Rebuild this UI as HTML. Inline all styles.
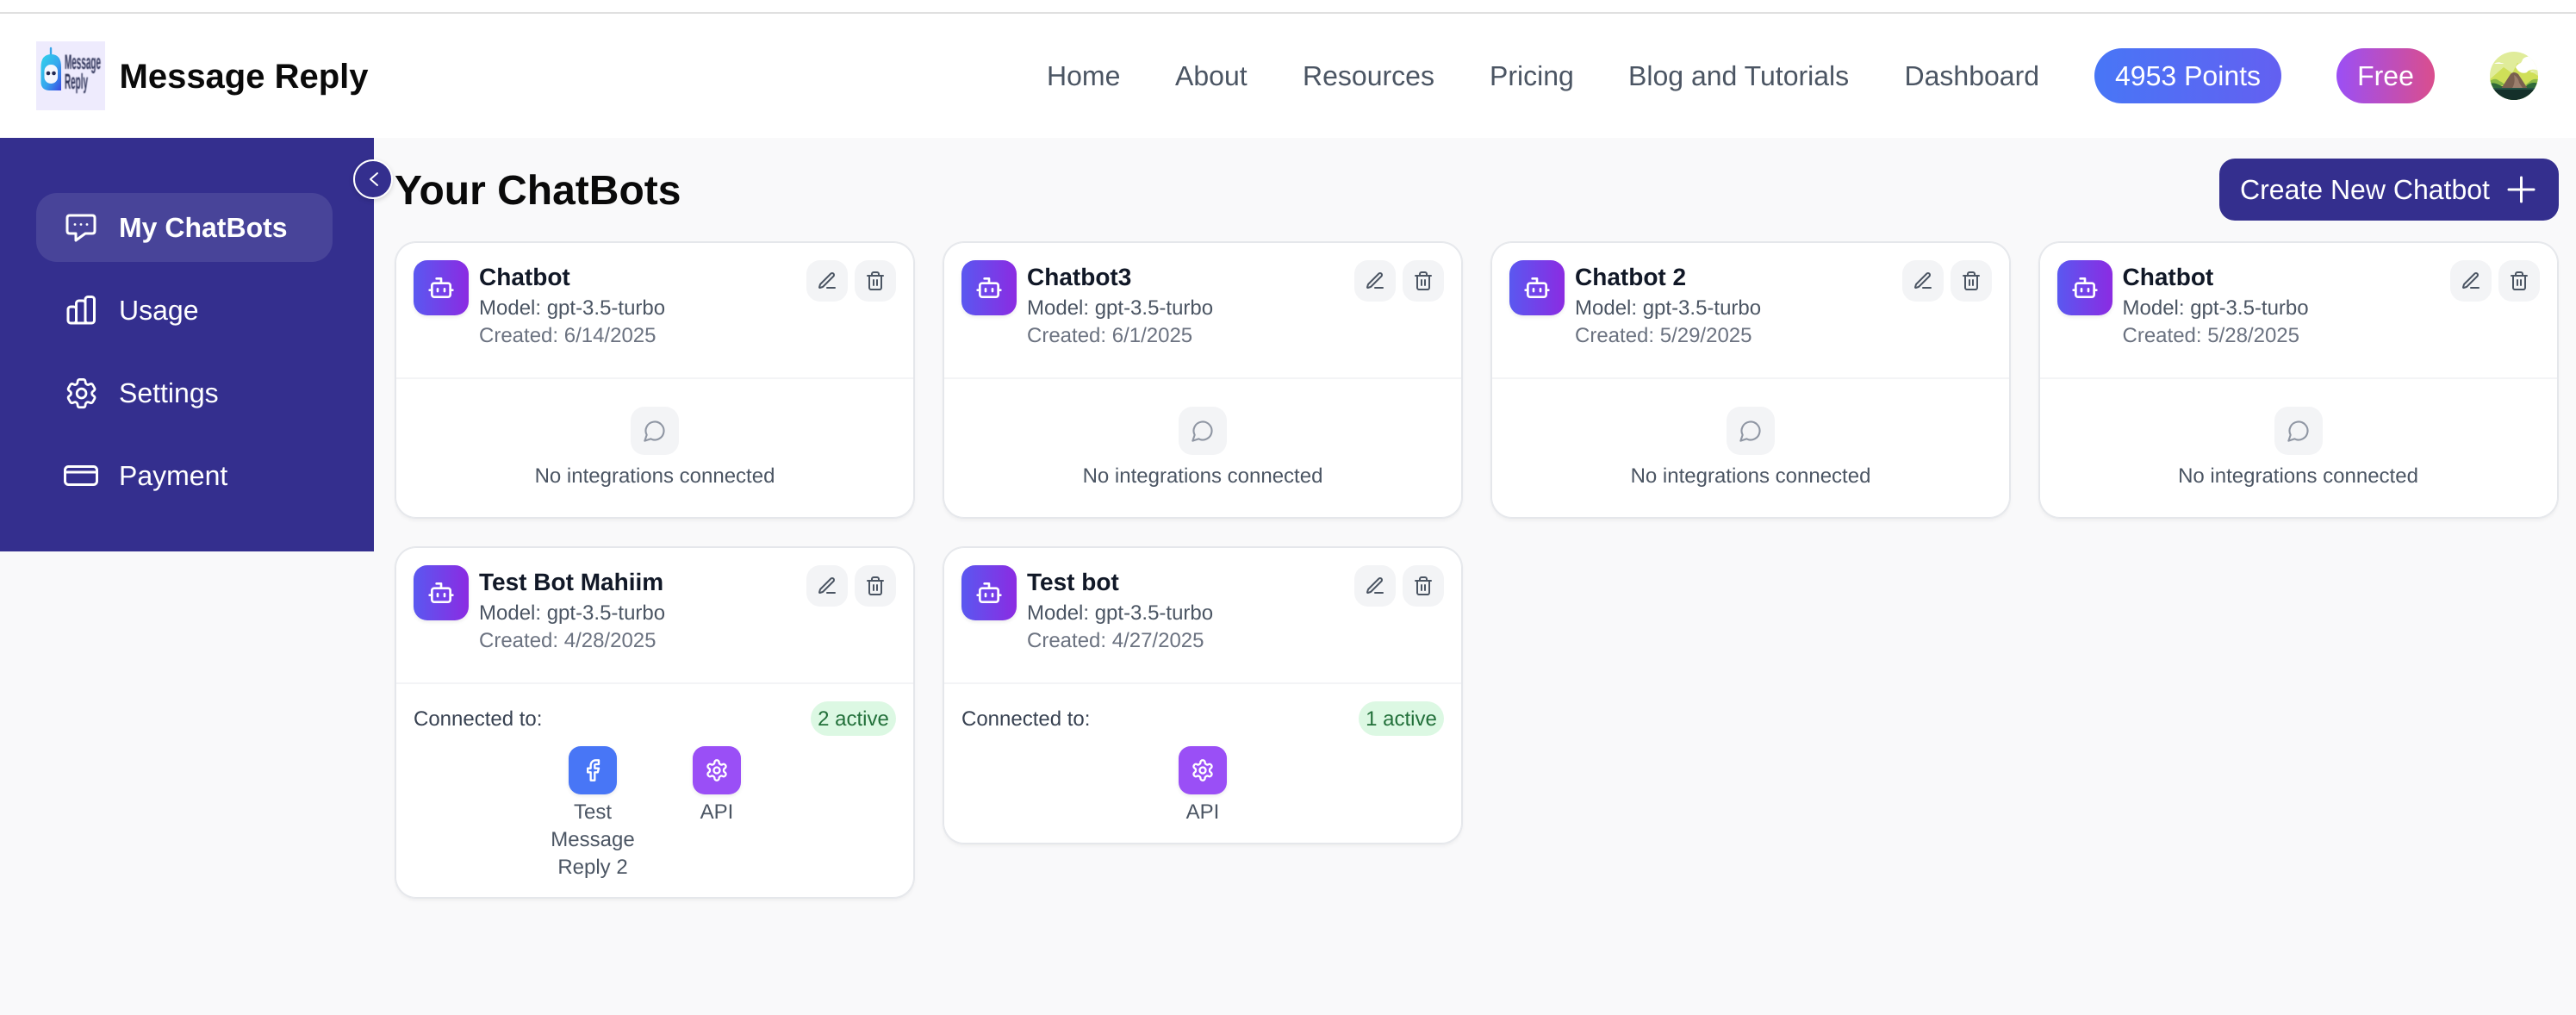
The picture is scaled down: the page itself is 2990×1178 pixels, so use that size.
<!DOCTYPE html>
<html lang="en">
<head>
<meta charset="utf-8">
<title>Message Reply</title>
<style>
*{box-sizing:border-box;margin:0;padding:0}
html,body{width:2990px;height:1178px;overflow:hidden;background:#f9f9fa;font-family:"Liberation Sans",Arial,sans-serif;text-rendering:geometricPrecision}
.a,.a>*{position:absolute}
.t{position:absolute;white-space:nowrap;line-height:32px}
svg{position:absolute;display:block;overflow:visible}
.top{left:0;top:0;width:2990px;height:160px;background:#fff}
.line{left:0;top:14px;width:2990px;height:2px;background:#e0e0e0}
.nav{top:72px;font-size:32px;color:#4b5563}
.pill{position:absolute;top:56px;height:64px;border-radius:32px;color:#fff;font-size:32px;line-height:64px;text-align:center}
.side{position:absolute;left:0;top:160px;width:434px;height:480px;background:#342f8e}
.mi{left:138px;font-size:32px;color:#fff}
.card{position:absolute;width:602px;background:#fff;border-radius:24px;box-shadow:0 0 0 1px #e5e7eb,inset 0 0 0 1px #e5e7eb,0 3px 5px rgba(0,0,0,.05)}
.bi{position:absolute;left:21px;top:21px;width:64px;height:64px;border-radius:16px;background:linear-gradient(90deg,#5a58f0,#8b2be2);box-shadow:0 2px 4px rgba(0,0,0,.08)}
.name{left:97px;top:25px;font-size:28px;font-weight:bold;color:#111827}
.model{left:97px;top:61px;font-size:24px;color:#4b5563}
.made{left:97px;top:93px;font-size:24px;color:#6b7280}
.btn{position:absolute;top:21px;width:48px;height:48px;border-radius:16px;background:#f3f4f6}
.e{left:477px}.d{left:533px}
.div{position:absolute;left:1px;right:1px;top:157px;height:2px;background:#f3f4f6}
.eb{position:absolute;left:273px;top:191px;width:56px;height:56px;border-radius:16px;background:#f3f4f6}
.et{left:0;width:602px;text-align:center;top:256px;font-size:24px;color:#4b5563}
.ct{left:21px;top:184px;font-size:24px;color:#374151}
.bd{position:absolute;left:482px;top:179px;width:99px;height:40px;border-radius:20px;background:#dcf8e3;color:#22703a;font-size:24px;line-height:41px;text-align:center}
.ib{position:absolute;top:231px;width:56px;height:56px;border-radius:14px;box-shadow:0 2px 4px rgba(0,0,0,.08)}
.fb{background:#4876f6}.api{background:#9a4ff6}
.lb{width:144px;text-align:center;font-size:24px;color:#4b5563}
.s{fill:none;stroke-linecap:round;stroke-linejoin:round}
</style>
</head>
<body>
<svg width="0" height="0" style="left:0;top:0">
<defs>
<symbol id="bot" viewBox="0 0 24 24"><g class="s" stroke="#fff" stroke-width="2"><path d="M12 8V4H8"/><rect x="4" y="8" width="16" height="12" rx="2"/><path d="M2 14h2M20 14h2M15 13v2M9 13v2"/></g></symbol>
<symbol id="pen" viewBox="0 0 24 24"><g class="s" stroke="#4b5563" stroke-width="2"><path d="M12 20h9"/><path d="M16.376 3.622a1 1 0 0 1 3.002 3.002L7.368 18.635a2 2 0 0 1-.855.506l-2.872.838a.5.5 0 0 1-.62-.62l.838-2.872a2 2 0 0 1 .506-.854z"/></g></symbol>
<symbol id="trash" viewBox="0 0 24 24"><g class="s" stroke="#4b5563" stroke-width="2"><path d="M3 6h18M19 6v14c0 1-1 2-2 2H7c-1 0-2-1-2-2V6M8 6V4c0-1 1-2 2-2h4c1 0 2 1 2 2v2M10 11v6M14 11v6"/></g></symbol>
<symbol id="bub" viewBox="0 0 24 24"><path class="s" stroke="#8f96a3" stroke-width="1.800" d="M7.9 20A9 9 0 1 0 4 16.1L2 22Z"/></symbol>
<symbol id="fbk" viewBox="0 0 24 24"><path class="s" stroke="#fff" stroke-width="2" d="M18 2h-3a5 5 0 0 0-5 5v3H7v4h3v8h4v-8h3l1-4h-4V7a1 1 0 0 1 1-1h3z"/></symbol>
<symbol id="gear" viewBox="0 0 24 24"><g class="s" stroke="#fff" stroke-width="2"><path d="M12.22 2h-.44a2 2 0 0 0-2 2v.18a2 2 0 0 1-1 1.73l-.43.25a2 2 0 0 1-2 0l-.15-.08a2 2 0 0 0-2.73.73l-.22.38a2 2 0 0 0 .73 2.73l.15.1a2 2 0 0 1 1 1.72v.51a2 2 0 0 1-1 1.74l-.15.09a2 2 0 0 0-.73 2.73l.22.38a2 2 0 0 0 2.73.73l.15-.08a2 2 0 0 1 2 0l.43.25a2 2 0 0 1 1 1.73V20a2 2 0 0 0 2 2h.44a2 2 0 0 0 2-2v-.18a2 2 0 0 1 1-1.73l.43-.25a2 2 0 0 1 2 0l.15.08a2 2 0 0 0 2.73-.73l.22-.39a2 2 0 0 0-.73-2.73l-.15-.08a2 2 0 0 1-1-1.74v-.5a2 2 0 0 1 1-1.74l.15-.09a2 2 0 0 0 .73-2.73l-.22-.38a2 2 0 0 0-2.73-.73l-.15.08a2 2 0 0 1-2 0l-.43-.25a2 2 0 0 1-1-1.73V4a2 2 0 0 0-2-2z"/><circle cx="12" cy="12" r="3"/></g></symbol>
</defs>
</svg>

<div class="a top"></div>
<div class="a line"></div>

<!-- Logo -->
<svg style="left:42px;top:48px" width="80" height="80" viewBox="42 48 80 80">
<defs><linearGradient id="lg" x1="0" y1="0" x2="1" y2="1"><stop offset="0" stop-color="#2fd4ea"/><stop offset=".55" stop-color="#36a6ee"/><stop offset="1" stop-color="#3a48e2"/></linearGradient></defs>
<rect x="42" y="48" width="80" height="80" fill="#eeebfd"/>
<path d="M59 56v8" stroke="#3aa5e8" stroke-width="2.400" stroke-linecap="round"/>
<path d="M47.500 78Q47.500 63 59.500 63Q71 63 71 78V105H58Q47.500 105 47.500 95Z" fill="url(#lg)"/>
<rect x="51.500" y="75" width="15.500" height="22" rx="7.500" fill="#f3f6fe"/>
<circle cx="56" cy="85" r="2.300" fill="#232a52"/><circle cx="62.500" cy="85" r="2.300" fill="#232a52"/>
<g font-family="Liberation Sans, sans-serif" font-weight="bold" fill="#2a2f55" style="filter:blur(.4px)">
<text x="75" y="80" font-size="24" textLength="42" lengthAdjust="spacingAndGlyphs">Message</text>
<text x="75" y="103" font-size="25" textLength="27" lengthAdjust="spacingAndGlyphs">Reply</text>
</g>
</svg>
<div class="t" style="left:138.500px;top:71px;font-size:40px;line-height:36px;font-weight:bold;color:#0a0a0a">Message Reply</div>

<!-- Nav -->
<div class="t nav" style="left:1215px">Home</div>
<div class="t nav" style="left:1364px">About</div>
<div class="t nav" style="left:1512px">Resources</div>
<div class="t nav" style="left:1729px">Pricing</div>
<div class="t nav" style="left:1890px">Blog and Tutorials</div>
<div class="t nav" style="left:2210.500px">Dashboard</div>
<div class="pill" style="left:2431px;width:217px;background:linear-gradient(90deg,#4876f6,#6360f1)">4953 Points</div>
<div class="pill" style="left:2712px;width:114px;background:linear-gradient(90deg,#9b4ff5,#da4e8d)">Free</div>

<!-- Avatar -->
<svg style="left:2890px;top:60px" width="56" height="56" viewBox="0 0 56 56">
<defs><clipPath id="av"><circle cx="28" cy="28" r="28"/></clipPath></defs>
<g clip-path="url(#av)">
<rect width="56" height="56" fill="#e0ec9a"/>
<path d="M0 32 L16 18 L26 25 L32 13 L56 28 V56 H0Z" fill="#cfdf58"/>
<path d="M30 18C33 12 36 16 38 9C42 4 50 5 56 8V22C52 20 46 20 43 24C38 26 33 24 30 18Z" fill="#fff"/>
<path d="M5 14c3-2 6-2 8-1 2 0 3 1 4 1H5ZM46 24c2-1 4-1 6 0H46Z" fill="#fff"/>
<path d="M0 34c4-3 8-3 11 0 3 1 5 3 7 5H0ZM56 32c-5-1-8 1-10 3l-5 4h15Z" fill="#89b846"/>
<path d="M0 37C5 35 10 38 14 40L42 40C46 36 52 35 56 37V56H0Z" fill="#2f6a3a"/>
<path d="M13 43L24 26Q28 22 33 26L44 43Z" fill="#7a6050"/>
<path d="M28 27Q33 30 34 36L38 42H26Q30 36 28 27Z" fill="#9c7f6d"/>
<rect y="42" width="56" height="14" fill="#14302a"/>
<rect y="42" width="56" height="2" fill="#235044"/>
</g>
</svg>

<!-- Sidebar -->
<div class="side"></div>
<div class="a" style="left:42px;top:224px;width:344px;height:80px;border-radius:24px;background:rgba(255,255,255,.1)"></div>
<svg style="left:70px;top:240px" width="50" height="50" viewBox="70 240 50 50"><g class="s" stroke="#fff" stroke-width="3"><path d="M81 250H107Q110 250 110 253V268Q110 271 107 271H99L88 279V271H81Q78 271 78 268V253Q78 250 81 250Z"/></g><g fill="#fff"><circle cx="87" cy="260.500" r="1.400"/><circle cx="94" cy="260.500" r="1.400"/><circle cx="101" cy="260.500" r="1.400"/></g></svg>
<div class="t mi" style="top:248px;font-weight:bold">My ChatBots</div>

<svg style="left:70px;top:335px" width="50" height="50" viewBox="70 335 50 50"><g class="s" stroke="#fff" stroke-width="3"><rect x="79" y="356" width="9.500" height="19" rx="3"/><path d="M88.500 375V352a3 3 0 0 1 3-3h4.500a3 3 0 0 1 3 3V375"/><rect x="99" y="344.500" width="10.500" height="30.500" rx="3"/><path d="M85 375H103"/></g></svg>
<div class="t mi" style="top:344px">Usage</div>

<svg style="left:72.500px;top:434.500px" width="43.200" height="43.200" viewBox="0 0 24 24"><g class="s" stroke="#fff" stroke-width="1.550"><path d="M9.594 3.94c.09-.542.56-.94 1.11-.94h2.593c.55 0 1.02.398 1.11.94l.213 1.281c.063.374.313.686.645.87.074.04.147.083.22.127.325.196.72.257 1.075.124l1.217-.456a1.125 1.125 0 0 1 1.37.49l1.296 2.247a1.125 1.125 0 0 1-.26 1.431l-1.003.827c-.293.241-.438.613-.43.992a7.723 7.723 0 0 1 0 .255c-.008.378.137.75.43.991l1.004.827c.424.35.534.955.26 1.43l-1.298 2.247a1.125 1.125 0 0 1-1.369.491l-1.217-.456c-.355-.133-.75-.072-1.076.124a6.47 6.47 0 0 1-.22.128c-.331.183-.581.495-.644.869l-.213 1.281c-.09.543-.56.94-1.11.94h-2.594c-.55 0-1.019-.398-1.11-.94l-.213-1.281c-.062-.374-.312-.686-.644-.87a6.52 6.52 0 0 1-.22-.127c-.325-.196-.72-.257-1.076-.124l-1.217.456a1.125 1.125 0 0 1-1.369-.49l-1.297-2.247a1.125 1.125 0 0 1 .26-1.431l1.004-.827c.292-.24.437-.613.43-.991a6.932 6.932 0 0 1 0-.255c.007-.38-.138-.751-.43-.992l-1.004-.827a1.125 1.125 0 0 1-.26-1.43l1.297-2.247a1.125 1.125 0 0 1 1.37-.491l1.216.456c.356.133.751.072 1.076-.124.072-.044.146-.086.22-.128.332-.183.582-.495.644-.869l.214-1.28Z"/><circle cx="12" cy="12" r="3"/></g></svg>
<div class="t mi" style="top:440px">Settings</div>

<svg style="left:70px;top:530px" width="50" height="44" viewBox="70 530 50 44"><g class="s" stroke="#fff" stroke-width="3"><rect x="75.500" y="541.500" width="37" height="21" rx="4"/><path d="M75.500 548H112.500"/></g></svg>
<div class="t mi" style="top:536px">Payment</div>

<!-- Toggle -->
<div class="a" style="left:410px;top:185px;width:46px;height:46px;border-radius:50%;background:#342f8e;border:2px solid #fff;box-shadow:0 2px 6px rgba(0,0,0,.15)"></div>
<svg style="left:420px;top:195px" width="26" height="26" viewBox="420 195 26 26"><path class="s" stroke="#fff" stroke-width="2" d="M438 201L430 208L438 215"/></svg>

<!-- Title -->
<div class="t" style="left:458px;top:197.500px;font-size:48px;line-height:48px;font-weight:bold;color:#0a0a0a">Your ChatBots</div>

<!-- Create -->
<div class="a" style="left:2576px;top:184px;width:394px;height:72px;border-radius:18px;background:#342f8e"></div>
<div class="t" style="left:2600px;top:204px;font-size:32px;color:#fff">Create New Chatbot</div>
<svg style="left:2908px;top:202px" width="36" height="36" viewBox="0 0 36 36"><path class="s" stroke="#fff" stroke-width="3" d="M4 18H33M18.500 4V32"/></svg>

<!-- Card 1 -->
<div class="card" style="left:459px;top:281px;height:320px">
<div class="bi"><svg style="left:16px;top:16px" width="32" height="32"><use href="#bot"/></svg></div>
<div class="t name">Chatbot</div><div class="t model">Model: gpt-3.5-turbo</div><div class="t made">Created: 6/14/2025</div>
<div class="btn e"><svg style="left:12px;top:12px" width="24" height="24"><use href="#pen"/></svg></div>
<div class="btn d"><svg style="left:12px;top:12px" width="24" height="24"><use href="#trash"/></svg></div>
<div class="div"></div>
<div class="eb"><svg style="left:14px;top:14px" width="28" height="28"><use href="#bub"/></svg></div>
<div class="t et">No integrations connected</div>
</div>

<!-- Card 2 -->
<div class="card" style="left:1095px;top:281px;height:320px">
<div class="bi"><svg style="left:16px;top:16px" width="32" height="32"><use href="#bot"/></svg></div>
<div class="t name">Chatbot3</div><div class="t model">Model: gpt-3.5-turbo</div><div class="t made">Created: 6/1/2025</div>
<div class="btn e"><svg style="left:12px;top:12px" width="24" height="24"><use href="#pen"/></svg></div>
<div class="btn d"><svg style="left:12px;top:12px" width="24" height="24"><use href="#trash"/></svg></div>
<div class="div"></div>
<div class="eb"><svg style="left:14px;top:14px" width="28" height="28"><use href="#bub"/></svg></div>
<div class="t et">No integrations connected</div>
</div>

<!-- Card 3 -->
<div class="card" style="left:1731px;top:281px;height:320px">
<div class="bi"><svg style="left:16px;top:16px" width="32" height="32"><use href="#bot"/></svg></div>
<div class="t name">Chatbot 2</div><div class="t model">Model: gpt-3.5-turbo</div><div class="t made">Created: 5/29/2025</div>
<div class="btn e"><svg style="left:12px;top:12px" width="24" height="24"><use href="#pen"/></svg></div>
<div class="btn d"><svg style="left:12px;top:12px" width="24" height="24"><use href="#trash"/></svg></div>
<div class="div"></div>
<div class="eb"><svg style="left:14px;top:14px" width="28" height="28"><use href="#bub"/></svg></div>
<div class="t et">No integrations connected</div>
</div>

<!-- Card 4 -->
<div class="card" style="left:2366.500px;top:281px;height:320px">
<div class="bi"><svg style="left:16px;top:16px" width="32" height="32"><use href="#bot"/></svg></div>
<div class="t name">Chatbot</div><div class="t model">Model: gpt-3.5-turbo</div><div class="t made">Created: 5/28/2025</div>
<div class="btn e"><svg style="left:12px;top:12px" width="24" height="24"><use href="#pen"/></svg></div>
<div class="btn d"><svg style="left:12px;top:12px" width="24" height="24"><use href="#trash"/></svg></div>
<div class="div"></div>
<div class="eb"><svg style="left:14px;top:14px" width="28" height="28"><use href="#bub"/></svg></div>
<div class="t et">No integrations connected</div>
</div>

<!-- Card 5 -->
<div class="card" style="left:459px;top:635px;height:407px">
<div class="bi"><svg style="left:16px;top:16px" width="32" height="32"><use href="#bot"/></svg></div>
<div class="t name">Test Bot Mahiim</div><div class="t model">Model: gpt-3.5-turbo</div><div class="t made">Created: 4/28/2025</div>
<div class="btn e"><svg style="left:12px;top:12px" width="24" height="24"><use href="#pen"/></svg></div>
<div class="btn d"><svg style="left:12px;top:12px" width="24" height="24"><use href="#trash"/></svg></div>
<div class="div"></div>
<div class="t ct">Connected to:</div>
<div class="bd">2 active</div>
<div class="ib fb" style="left:201px"><svg style="left:14px;top:14px" width="28" height="28"><use href="#fbk"/></svg></div>
<div class="t lb" style="left:157px;top:292px">Test</div>
<div class="t lb" style="left:157px;top:324px">Message</div>
<div class="t lb" style="left:157px;top:356px">Reply 2</div>
<div class="ib api" style="left:345px"><svg style="left:14px;top:14px" width="28" height="28"><use href="#gear"/></svg></div>
<div class="t lb" style="left:301px;top:292px">API</div>
</div>

<!-- Card 6 -->
<div class="card" style="left:1095px;top:635px;height:344px">
<div class="bi"><svg style="left:16px;top:16px" width="32" height="32"><use href="#bot"/></svg></div>
<div class="t name">Test bot</div><div class="t model">Model: gpt-3.5-turbo</div><div class="t made">Created: 4/27/2025</div>
<div class="btn e"><svg style="left:12px;top:12px" width="24" height="24"><use href="#pen"/></svg></div>
<div class="btn d"><svg style="left:12px;top:12px" width="24" height="24"><use href="#trash"/></svg></div>
<div class="div"></div>
<div class="t ct">Connected to:</div>
<div class="bd">1 active</div>
<div class="ib api" style="left:273px"><svg style="left:14px;top:14px" width="28" height="28"><use href="#gear"/></svg></div>
<div class="t lb" style="left:229px;top:292px">API</div>
</div>
</body>
</html>
